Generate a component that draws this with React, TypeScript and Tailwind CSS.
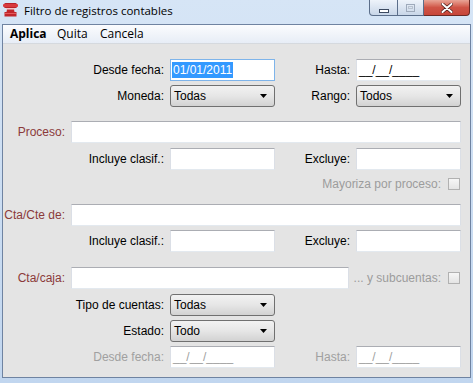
import React from "react";

const labelCls = "text-[12px] leading-[14px] text-right whitespace-nowrap";

const TextBox: React.FC<{ w: string; focused?: boolean; children?: React.ReactNode }> = ({
  w,
  focused,
  children,
}) => (
  <div
    className={
      w +
      " h-[22px] bg-white border flex items-center pl-[1px] text-[12px] leading-[14px] " +
      (focused
        ? "border-[#7eb4ea]"
        : "border-t-[#abadb3] border-x-[#dbdfe6] border-b-[#e3e9ef]")
    }
  >
    {children}
  </div>
);

const Combo: React.FC<{ value: string }> = ({ value }) => (
  <div className="w-[105px] h-[22px] rounded-[3px] border border-[#707070] bg-gradient-to-b from-[#f2f2f2] via-[#e6e6e6] to-[#d2d2d2] flex items-center pl-[3px] pr-[7px] text-[12px] leading-[14px]">
    <span className="flex-1">{value}</span>
    <svg width="7" height="4" viewBox="0 0 7 4">
      <path d="M0 0 H7 L3.5 4 Z" fill="#000" />
    </svg>
  </div>
);

const CheckBox: React.FC = () => (
  <div className="w-[12px] h-[12px] border border-[#b1b1b1] bg-gradient-to-b from-[#f6f6f6] to-[#e4e4e4]" />
);

const DateMask: React.FC<{ gray?: boolean }> = ({ gray }) => (
  <span className={gray ? "text-[#a0a0a0] pl-[1px]" : "text-black pl-[1px]"}>__/__/____</span>
);

// two-column row: label / field / label / field
const PairRow: React.FC<{
  mt: string;
  l1: string;
  f1: React.ReactNode;
  l2: string;
  f2: React.ReactNode;
  gray?: boolean;
}> = ({ mt, l1, f1, l2, f2, gray }) => (
  <div className={mt + " flex items-center h-[22px]"}>
    <span className={labelCls + " w-[167px] pr-[6px] " + (gray ? "text-[#a0a0a0]" : "text-black")}>{l1}</span>
    {f1}
    <span className={labelCls + " w-[81px] pr-[6px] " + (gray ? "text-[#a0a0a0]" : "text-black")}>{l2}</span>
    {f2}
  </div>
);

const WideRow: React.FC<{ mt: string; label: string; children: React.ReactNode }> = ({ mt, label, children }) => (
  <div className={mt + " flex items-center h-[22px]"}>
    <span className={labelCls + " w-[68px] pr-[6px] text-[#8b3a3a]"}>{label}</span>
    {children}
  </div>
);

const AppIcon = () => (
  <svg width="15" height="14" viewBox="0 0 15 14">
    <rect x="1" y="0" width="13" height="5" rx="1.5" fill="#b8222a" />
    <rect x="0" y="1" width="15" height="3" rx="1" fill="#d83a3e" />
    <rect x="3" y="5" width="9" height="1.5" fill="#f2c6c6" />
    <path d="M4 6.5 H11 L11.5 9 H13.5 V13.5 H1.5 V9 H3.5 Z" fill="#c1272d" />
    <rect x="2" y="10" width="11" height="1" fill="#e35a5e" />
  </svg>
);

export default function App() {
  return (
    <div className="w-[473px] h-[383px] flex flex-col bg-gradient-to-b from-[#d6e5f6] to-[#c1d6ef] font-['Liberation_Sans',Arial,sans-serif] text-black select-none">
      {/* title bar */}
      <div className="h-[24px] flex items-start shrink-0">
        <div className="ml-[3px] mt-[3px]">
          <AppIcon />
        </div>
        <span className="ml-[6px] mt-[3px] text-[11.5px] leading-[16px] font-['Segoe_UI','Open_Sans',sans-serif] text-black">
          Filtro de registros contables
        </span>
        <div className="ml-auto mr-[3px] flex h-[16px]">
          <div className="w-[29px] h-full border border-t-0 border-[#5b6e8a] rounded-bl-[4px] bg-gradient-to-b from-[#eef3fa] to-[#c8d6e8] flex items-end justify-center pb-[2px]">
            <div className="w-[10px] h-[4px] bg-white border border-[#3c4a60]" />
          </div>
          <div className="w-[26px] h-full border border-t-0 border-l-0 border-[#5b6e8a] bg-gradient-to-b from-[#eef3fa] to-[#c8d6e8] flex items-center justify-center">
            <div className="w-[9px] h-[8px] border border-[#9eaabb] flex items-center justify-center">
              <div className="w-[5px] h-[3px] border border-[#b9c3d0]" />
            </div>
          </div>
          <div className="w-[46px] h-full border border-t-0 border-l-0 border-[#6b2a25] rounded-br-[4px] bg-gradient-to-b from-[#e8a597] via-[#cf5446] to-[#c7463a] flex items-center justify-center">
            <svg width="12" height="10" viewBox="0 0 12 10">
              <path d="M1.5 1 L10.5 9 M10.5 1 L1.5 9" stroke="#4a1a16" strokeWidth="3.4" strokeLinecap="round" />
              <path d="M1.5 1 L10.5 9 M10.5 1 L1.5 9" stroke="#fff" strokeWidth="2" strokeLinecap="round" />
            </svg>
          </div>
        </div>
      </div>

      {/* client area */}
      <div className="flex-1 mx-[2px] mb-[5px] border border-[#6f83a1] bg-[#e4e4e4] flex flex-col">
        {/* menu bar */}
        <div className="h-[19px] shrink-0 flex items-center pl-[7px] bg-gradient-to-b from-[#fbfcfe] to-[#e7edf6] border-b border-[#d5d9de] font-['Segoe_UI','Open_Sans',sans-serif] text-[12px] leading-[16px]">
          <span className="w-[47px] font-bold">Aplica</span>
          <span className="w-[43px]">Quita</span>
          <span>Cancela</span>
        </div>

        {/* form */}
        <div className="flex flex-col">
          <PairRow
            mt="mt-[15px]"
            l1="Desde fecha:"
            f1={
              <TextBox w="w-[105px]" focused>
                <span className="bg-[#3399ff] text-white px-[1px] leading-[16px]">01/01/2011</span>
              </TextBox>
            }
            l2="Hasta:"
            f2={
              <TextBox w="w-[105px]">
                <DateMask />
              </TextBox>
            }
          />
          <PairRow mt="mt-[4px]" l1="Moneda:" f1={<Combo value="Todas" />} l2="Rango:" f2={<Combo value="Todos" />} />

          <WideRow mt="mt-[14px]" label="Proceso:">
            <TextBox w="w-[390px]" />
          </WideRow>
          <PairRow
            mt="mt-[5px]"
            l1="Incluye clasif.:"
            f1={<TextBox w="w-[105px]" />}
            l2="Excluye:"
            f2={<TextBox w="w-[105px]" />}
          />
          <div className="mt-[6px] h-[16px] flex items-center justify-end gap-[7px] pr-[10px]">
            <span className={labelCls + " text-[#9c9c9c]"}>Mayoriza por proceso:</span>
            <CheckBox />
          </div>

          <WideRow mt="mt-[12px]" label="Cta/Cte de:">
            <TextBox w="w-[390px]" />
          </WideRow>
          <PairRow
            mt="mt-[4px]"
            l1="Incluye clasif.:"
            f1={<TextBox w="w-[105px]" />}
            l2="Excluye:"
            f2={<TextBox w="w-[105px]" />}
          />

          <WideRow mt="mt-[15px]" label="Cta/caja:">
            <TextBox w="w-[278px]" />
            <span className={labelCls + " flex-1 pr-[7px] text-[#9c9c9c]"}>... y subcuentas:</span>
            <CheckBox />
            <div className="w-[10px]" />
          </WideRow>
          <div className="mt-[5px] flex items-center h-[22px]">
            <span className={labelCls + " w-[167px] pr-[6px]"}>Tipo de cuentas:</span>
            <Combo value="Todas" />
          </div>
          <div className="mt-[4px] flex items-center h-[22px]">
            <span className={labelCls + " w-[167px] pr-[6px]"}>Estado:</span>
            <Combo value="Todo" />
          </div>
          <PairRow
            mt="mt-[4px]"
            gray
            l1="Desde fecha:"
            f1={
              <TextBox w="w-[105px]">
                <DateMask gray />
              </TextBox>
            }
            l2="Hasta:"
            f2={
              <TextBox w="w-[105px]">
                <DateMask gray />
              </TextBox>
            }
          />
        </div>
      </div>
    </div>
  );
}
